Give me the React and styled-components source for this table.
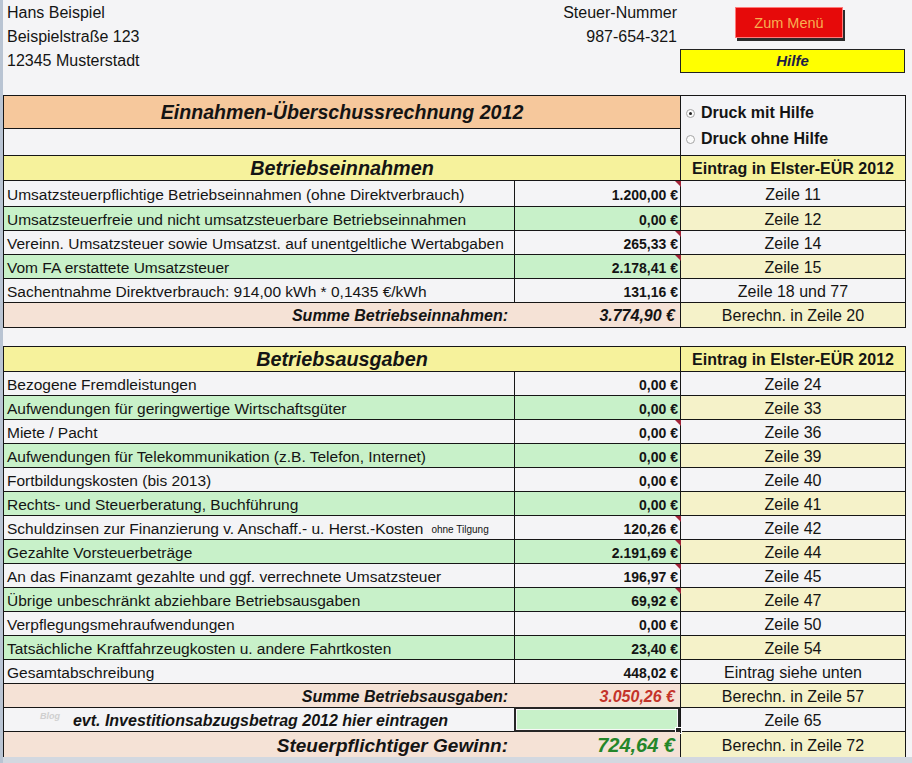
import React from 'react';
import styled, { createGlobalStyle, css } from 'styled-components';

const GlobalStyle = createGlobalStyle`
  html, body { margin: 0; padding: 0; }
  body {
    background: #f4f4f6;
    font-family: "Liberation Sans", Arial, sans-serif;
    color: #141414;
  }
`;

const C = {
  bg: '#f4f4f6',
  line: '#161616',
  peach: '#f6c89c',
  yellow: '#f6f29c',
  green: '#c8f1c9',
  paleYellow: '#f5f2c9',
  sum: '#f5e2d6',
};

const Page = styled.div`
  min-height: 763px;
  border-left: 3px solid #b9c4d3;
  box-sizing: border-box;
  display: flex;
  flex-direction: column;
`;

const Head = styled.div`
  display: grid;
  grid-template-columns: 511px 166px 225px;
  grid-template-rows: repeat(3, 24px);
  padding-top: 1px;
`;

const Addr = styled.div`
  grid-column: 1;
  padding-left: 4px;
  font-size: 16px;
  line-height: 24px;
`;

const TaxNo = styled.div`
  grid-column: 2;
  text-align: right;
  padding-right: 3px;
  font-size: 16px;
  line-height: 24px;
`;

const MenuButton = styled.button`
  grid-column: 3;
  grid-row: 1 / span 2;
  align-self: start;
  justify-self: start;
  margin: 6px 0 0 55px;
  width: 108px;
  height: 31px;
  background: #e60a0a;
  border: 1px solid #ff7a7a;
  box-shadow: 2px 3px 0 #2b2b2b;
  color: #f7b052;
  font-family: "Liberation Sans", Arial, sans-serif;
  font-size: 14.5px;
  padding: 0;
  cursor: pointer;
`;

const HelpBox = styled.div`
  grid-column: 3;
  grid-row: 3;
  background: #ffff00;
  border: 1px solid #222;
  box-sizing: border-box;
  text-align: center;
  font-size: 15px;
  font-weight: bold;
  font-style: italic;
  color: #1c1c48;
  line-height: 22px;
`;

const Table = styled.div`
  width: 903px;
  box-sizing: border-box;
  border: 1px solid ${C.line};
  margin-top: ${(p) => p.$gap}px;
  display: flex;
  flex-direction: column;
`;

const TitleBlock = styled.div`
  display: grid;
  grid-template-columns: 676px 225px;
  grid-template-rows: 33px 27px;
`;

const TitleCell = styled.div`
  background: ${C.peach};
  border-bottom: 1px solid ${C.line};
  box-sizing: border-box;
  display: flex;
  align-items: center;
  justify-content: center;
  font-size: 19.6px;
  font-weight: bold;
  font-style: italic;
  padding-top: 1px;
`;

const BlankCell = styled.div`
  border-bottom: 1px solid ${C.line};
  box-sizing: border-box;
`;

const RadioCell = styled.div`
  grid-column: 2;
  grid-row: 1 / span 2;
  border-left: 1px solid ${C.line};
  border-bottom: 1px solid ${C.line};
  box-sizing: border-box;
  padding: 4px 0 0 5px;
  display: flex;
  flex-direction: column;
`;

const RadioRow = styled.label`
  height: 26px;
  display: flex;
  align-items: center;
  gap: 6px;
  font-size: 16px;
  font-weight: bold;
`;

const RadioDot = styled.span`
  width: 9px;
  height: 9px;
  border-radius: 50%;
  border: 1px solid #a4a4a4;
  background: #fbfbfb;
  box-sizing: border-box;
  display: flex;
  align-items: center;
  justify-content: center;
  &::after {
    content: '';
    width: 3px;
    height: 3px;
    border-radius: 50%;
    background: ${(p) => (p.$on ? '#222' : 'transparent')};
  }
`;

const Row = styled.div`
  display: grid;
  grid-template-columns: 510px 166px 225px;
  height: ${(p) => p.$h || 24}px;
  box-sizing: border-box;
  border-bottom: ${(p) => (p.$last ? 'none' : `1px solid ${C.line}`)};
`;

const tones = {
  white: { main: C.bg, side: C.bg },
  green: { main: C.green, side: C.paleYellow },
  sum: { main: C.sum, side: C.paleYellow },
  header: { main: C.yellow, side: C.yellow },
  input: { main: C.bg, side: C.bg },
};

const Label = styled.div`
  background: ${(p) => tones[p.$tone].main};
  padding: 2px 0 0 3px;
  display: flex;
  align-items: center;
  font-size: 15.5px;
  white-space: nowrap;
  position: relative;
  ${(p) =>
    p.$sum &&
    css`
      justify-content: flex-end;
      padding-right: 6px;
      font-weight: bold;
      font-style: italic;
      font-size: ${p.$big ? 19 : 16}px;
    `}
  ${(p) =>
    p.$center &&
    css`
      justify-content: center;
      font-weight: bold;
      font-style: italic;
      font-size: 16px;
    `}
`;

const Small = styled.span`
  font-size: 10px;
  margin-left: 8px;
  padding-top: 2px;
`;

const Faint = styled.span`
  position: absolute;
  left: 36px;
  top: 3px;
  font-size: 9px;
  color: #cfcfcf;
`;

const Value = styled.div`
  background: ${(p) => tones[p.$tone].main};
  border-left: ${(p) => (p.$open ? 'none' : `1px solid ${C.line}`)};
  box-sizing: border-box;
  padding: 2px 2px 0 0;
  display: flex;
  align-items: center;
  justify-content: flex-end;
  font-size: 14px;
  font-weight: bold;
  position: relative;
  ${(p) =>
    p.$emph &&
    css`
      font-style: italic;
      font-size: ${p.$emph === 'win' ? 20 : 16}px;
      color: ${p.$emph === 'win' ? '#24862a' : p.$emph === 'neg' ? '#c4332a' : '#141414'};
      padding-right: 5px;
    `}
`;

const Note = styled.span`
  position: absolute;
  top: 0;
  right: -1px;
  width: 0;
  height: 0;
  border-top: 6px solid #a32438;
  border-left: 6px solid transparent;
`;

const InputValue = styled.div`
  background: ${C.green};
  box-sizing: border-box;
  border: 2px solid #262626;
  box-shadow: inset 0 0 0 1px #f8f8f8;
  margin: -1px 0 -1px 0;
  position: relative;
`;

const Handle = styled.span`
  position: absolute;
  right: -4px;
  bottom: -4px;
  width: 5px;
  height: 5px;
  background: #222;
  border: 1px solid #fff;
`;

const Zeile = styled.div`
  background: ${(p) => tones[p.$tone].side};
  border-left: 1px solid ${C.line};
  box-sizing: border-box;
  padding-top: 2px;
  display: flex;
  align-items: center;
  justify-content: center;
  font-size: 16px;
  font-weight: ${(p) => (p.$bold ? 'bold' : 'normal')};
`;

const HeaderTitle = styled.div`
  grid-column: 1 / span 2;
  background: ${C.yellow};
  display: flex;
  align-items: center;
  justify-content: center;
  font-size: 19.8px;
  font-weight: bold;
  font-style: italic;
  padding-top: 1px;
`;

const BottomStrip = styled.div`
  margin-top: auto;
  height: 6px;
  background: #d3d8e0;
`;

const income = [
  { label: 'Umsatzsteuerpflichtige Betriebseinnahmen (ohne Direktverbrauch)', value: '1.200,00 €', zeile: 'Zeile 11', tone: 'white', note: true, h: 26 },
  { label: 'Umsatzsteuerfreie und nicht umsatzsteuerbare Betriebseinnahmen', value: '0,00 €', zeile: 'Zeile 12', tone: 'green' },
  { label: 'Vereinn. Umsatzsteuer sowie Umsatzst. auf unentgeltliche Wertabgaben', value: '265,33 €', zeile: 'Zeile 14', tone: 'white', note: true },
  { label: 'Vom FA erstattete Umsatzsteuer', value: '2.178,41 €', zeile: 'Zeile 15', tone: 'green', note: true },
  { label: 'Sachentnahme Direktverbrauch: 914,00 kWh * 0,1435 €/kWh', value: '131,16 €', zeile: 'Zeile 18 und 77', tone: 'white' },
];

const expenses = [
  { label: 'Bezogene Fremdleistungen', value: '0,00 €', zeile: 'Zeile 24', tone: 'white' },
  { label: 'Aufwendungen für geringwertige Wirtschaftsgüter', value: '0,00 €', zeile: 'Zeile 33', tone: 'green' },
  { label: 'Miete / Pacht', value: '0,00 €', zeile: 'Zeile 36', tone: 'white', note: true },
  { label: 'Aufwendungen für Telekommunikation (z.B. Telefon, Internet)', value: '0,00 €', zeile: 'Zeile 39', tone: 'green' },
  { label: 'Fortbildungskosten (bis 2013)', value: '0,00 €', zeile: 'Zeile 40', tone: 'white' },
  { label: 'Rechts- und Steuerberatung, Buchführung', value: '0,00 €', zeile: 'Zeile 41', tone: 'green' },
  { label: 'Schuldzinsen zur Finanzierung v. Anschaff.- u. Herst.-Kosten', small: 'ohne Tilgung', value: '120,26 €', zeile: 'Zeile 42', tone: 'white', note: true },
  { label: 'Gezahlte Vorsteuerbeträge', value: '2.191,69 €', zeile: 'Zeile 44', tone: 'green', note: true },
  { label: 'An das Finanzamt gezahlte und ggf. verrechnete Umsatzsteuer', value: '196,97 €', zeile: 'Zeile 45', tone: 'white', note: true },
  { label: 'Übrige unbeschränkt abziehbare Betriebsausgaben', value: '69,92 €', zeile: 'Zeile 47', tone: 'green', note: true },
  { label: 'Verpflegungsmehraufwendungen', value: '0,00 €', zeile: 'Zeile 50', tone: 'white' },
  { label: 'Tatsächliche Kraftfahrzeugkosten u. andere Fahrtkosten', value: '23,40 €', zeile: 'Zeile 54', tone: 'green' },
  { label: 'Gesamtabschreibung', value: '448,02 €', zeile: 'Eintrag siehe unten', tone: 'white' },
];

function DataRow({ r }) {
  return (
    <Row $h={r.h}>
      <Label $tone={r.tone}>
        {r.label}
        {r.small && <Small>{r.small}</Small>}
      </Label>
      <Value $tone={r.tone}>
        {r.value}
        {r.note && <Note />}
      </Value>
      <Zeile $tone={r.tone}>{r.zeile}</Zeile>
    </Row>
  );
}

function SectionHeader({ title, h }) {
  return (
    <Row $h={h}>
      <HeaderTitle>{title}</HeaderTitle>
      <Zeile $tone="header" $bold>
        Eintrag in Elster-EÜR 2012
      </Zeile>
    </Row>
  );
}

export default function App() {
  return (
    <>
      <GlobalStyle />
      <Page>
        <Head>
          <Addr>Hans Beispiel</Addr>
          <TaxNo>Steuer-Nummer</TaxNo>
          <MenuButton>Zum Menü</MenuButton>
          <Addr>Beispielstraße 123</Addr>
          <TaxNo>987-654-321</TaxNo>
          <Addr>12345 Musterstadt</Addr>
          <TaxNo />
          <HelpBox>Hilfe</HelpBox>
        </Head>

        <Table $gap={22}>
          <TitleBlock>
            <TitleCell>Einnahmen-Überschussrechnung 2012</TitleCell>
            <RadioCell>
              <RadioRow>
                <RadioDot $on />
                Druck mit Hilfe
              </RadioRow>
              <RadioRow>
                <RadioDot />
                Druck ohne Hilfe
              </RadioRow>
            </RadioCell>
            <BlankCell />
          </TitleBlock>
          <SectionHeader title="Betriebseinnahmen" h={25} />
          {income.map((r) => (
            <DataRow key={r.zeile} r={r} />
          ))}
          <Row $last $h={24}>
            <Label $tone="sum" $sum>
              Summe Betriebseinnahmen:
            </Label>
            <Value $tone="sum" $open $emph="sum">
              3.774,90 €
            </Value>
            <Zeile $tone="sum">Berechn. in Zeile 20</Zeile>
          </Row>
        </Table>

        <Table $gap={18}>
          <SectionHeader title="Betriebsausgaben" h={25} />
          {expenses.map((r) => (
            <DataRow key={r.zeile} r={r} />
          ))}
          <Row>
            <Label $tone="sum" $sum>
              Summe Betriebsausgaben:
            </Label>
            <Value $tone="sum" $open $emph="neg">
              3.050,26 €
            </Value>
            <Zeile $tone="sum">Berechn. in Zeile 57</Zeile>
          </Row>
          <Row>
            <Label $tone="input" $center>
              <Faint>Blog</Faint>
              evt. Investitionsabzugsbetrag 2012 hier eintragen
            </Label>
            <InputValue>
              <Handle />
            </InputValue>
            <Zeile $tone="input">Zeile 65</Zeile>
          </Row>
          <Row $last>
            <Label $tone="sum" $sum $big>
              Steuerpflichtiger Gewinn:
            </Label>
            <Value $tone="sum" $open $emph="win">
              724,64 €
            </Value>
            <Zeile $tone="sum">Berechn. in Zeile 72</Zeile>
          </Row>
        </Table>
        <BottomStrip />
      </Page>
    </>
  );
}
